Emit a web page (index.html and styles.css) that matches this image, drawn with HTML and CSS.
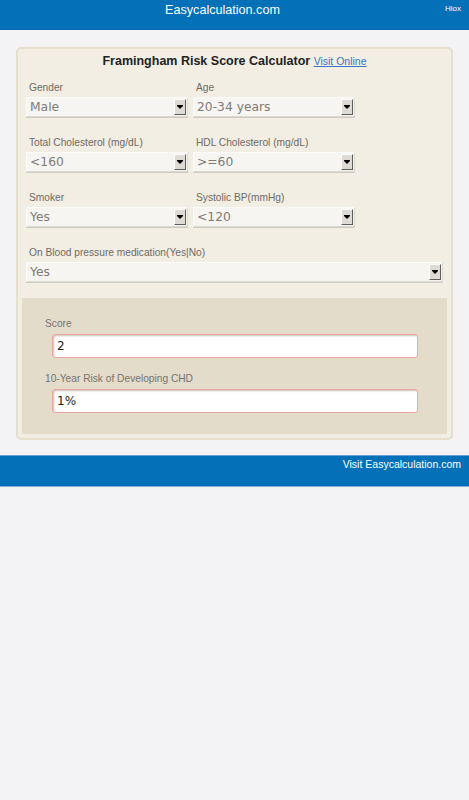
FILE: index.html
```html
<!DOCTYPE html>
<html>
<head>
<meta charset="utf-8">
<link rel="stylesheet" href="styles.css">
</head>
<body>
<header class="topbar">
  <span class="brand">Easycalculation.com</span>
  <span class="hiox">Hiox</span>
</header>
<main class="page">
  <section class="card">
    <h1 class="title">Framingham Risk Score Calculator <a class="visit" href="#">Visit Online</a></h1>
    <div class="grid">
      <div class="field">
        <label class="lbl">Gender</label>
        <div class="sel"><span class="val">Male</span><span class="arrow"></span></div>
      </div>
      <div class="field">
        <label class="lbl">Age</label>
        <div class="sel"><span class="val">20-34 years</span><span class="arrow"></span></div>
      </div>
      <div class="field">
        <label class="lbl">Total Cholesterol (mg/dL)</label>
        <div class="sel"><span class="val">&lt;160</span><span class="arrow"></span></div>
      </div>
      <div class="field">
        <label class="lbl">HDL Cholesterol (mg/dL)</label>
        <div class="sel"><span class="val">&gt;=60</span><span class="arrow"></span></div>
      </div>
      <div class="field">
        <label class="lbl">Smoker</label>
        <div class="sel"><span class="val">Yes</span><span class="arrow"></span></div>
      </div>
      <div class="field">
        <label class="lbl">Systolic BP(mmHg)</label>
        <div class="sel"><span class="val">&lt;120</span><span class="arrow"></span></div>
      </div>
      <div class="field wide">
        <label class="lbl">On Blood pressure medication(Yes|No)</label>
        <div class="sel"><span class="val">Yes</span><span class="arrow"></span></div>
      </div>
    </div>
    <div class="result">
      <label class="lbl">Score</label>
      <div class="out">2</div>
      <label class="lbl">10-Year Risk of Developing CHD</label>
      <div class="out">1%</div>
    </div>
  </section>
</main>
<footer class="foot">
  <a class="foot-link" href="#">Visit Easycalculation.com</a>
</footer>
</body>
</html>
```
FILE: styles.css
```css
html, body {
  margin: 0;
  padding: 0;
  background: #f3f2f4;
  font-family: "Liberation Sans", Arial, sans-serif;
}
.topbar {
  background: #0370b7;
  border-bottom: 1px solid #0567ad;
  position: relative;
  text-align: center;
  padding-right: 24px;
  box-sizing: border-box;
  height: 30px;
}
.brand {
  display: inline-block;
  color: #fff;
  font-size: 12.6px;
  line-height: 16px;
}
.hiox {
  position: absolute;
  right: 8px;
  top: 4px;
  color: #fff;
  font-size: 8px;
  line-height: 10px;
}
.page {
  padding: 17px 16px 15px 16px;
}
.card {
  background: #f2eee3;
  border: 2px solid #e6dfcc;
  border-radius: 5px;
  padding: 0 4px 4px 4px;
}
.title {
  margin: 0;
  text-align: center;
  font-size: 12.5px;
  font-weight: bold;
  color: #222;
  padding-top: 4px;
  line-height: 16px;
}
.visit {
  font-size: 10.5px;
  font-weight: normal;
  color: #3c73c9;
  text-decoration: underline;
}
.grid {
  display: grid;
  grid-template-columns: 162px 162px;
  column-gap: 5px;
  row-gap: 19px;
  padding: 12px 4px 0 4px;
}
.field {
  display: flex;
  flex-direction: column;
}
.field.wide {
  grid-column: 1 / 3;
  width: 417px;
}
.lbl {
  display: block;
  font-size: 10.2px;
  color: #6f6a66;
  line-height: 14px;
  height: 14px;
  padding-left: 3px;
}
.sel {
  display: flex;
  align-items: center;
  height: 20px;
  box-sizing: border-box;
  margin-top: 2px;
  background: #f6f5f2;
  border: 1px solid #dcd9d0;
  border-top-color: #fbfbfa;
  border-left-color: #fbfbfa;
  box-shadow: 0 1px 0 #cfcbc3;
}
.val {
  flex: 1;
  font-family: "DejaVu Sans", sans-serif;
  font-size: 12.3px;
  color: #7d7a77;
  padding-left: 3px;
  line-height: 18px;
}
.arrow {
  width: 12px;
  height: 16px;
  margin-right: 1px;
  background: #dedbd4;
  border-right: 1px solid #5e5e5e;
  border-bottom: 1px solid #5e5e5e;
  border-top: 1px solid #fff;
  border-left: 1px solid #fff;
  box-sizing: border-box;
  position: relative;
}
.arrow::after {
  content: "";
  position: absolute;
  left: 2px;
  top: 6px;
  border-left: 3px solid transparent;
  border-right: 3px solid transparent;
  border-top: 3px solid #000;
}
.arrow::before {
  content: "";
  position: absolute;
  left: 2px;
  top: 5px;
  width: 6px;
  height: 1px;
  background: #000;
}
.result {
  margin-top: 16px;
  background: #e3dccb;
  padding: 19px 29px 21px 23px;
}
.result .lbl {
  padding-left: 0;
  color: #77726c;
}
.result .out + .lbl {
  margin-top: 14px;
}
.out {
  margin-top: 3px;
  margin-left: 7px;
  height: 24px;
  box-sizing: border-box;
  background: #fff;
  border: 1px solid #eba3a0;
  border-radius: 3px;
  box-shadow: inset 2px 2px 2px -1px #c9c3b8;
  font-family: "DejaVu Sans", sans-serif;
  font-size: 12px;
  line-height: 22px;
  color: #222;
  padding-left: 4px;
}
.foot {
  height: 30px;
  background: #0370b7;
  border-top: 1px solid #6aa0d0;
  border-bottom: 1px solid #8fa6cf;
  text-align: right;
  padding-right: 8px;
  line-height: 14px;
}
.foot-link {
  color: #fff;
  font-size: 10.5px;
  text-decoration: none;
}
```
